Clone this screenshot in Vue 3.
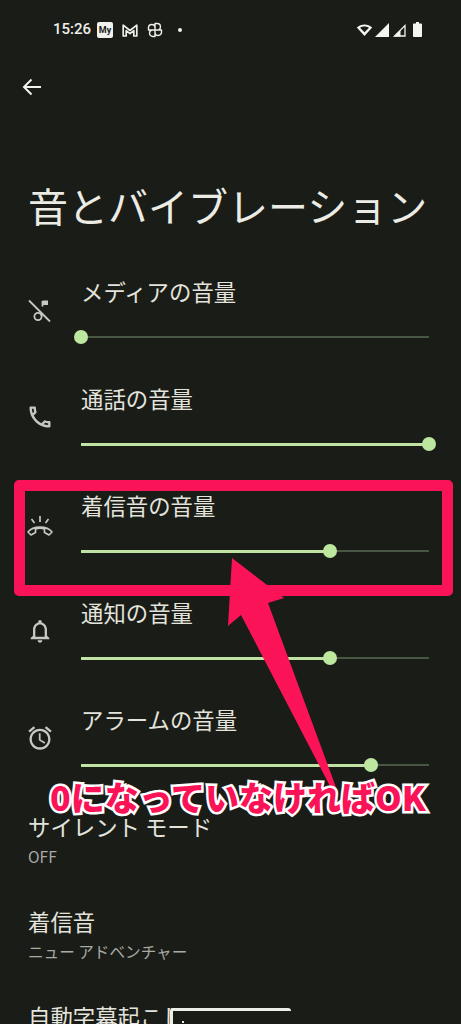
<template>
  <div class="screen">
    <div class="status">
      <span class="time">15:26</span>
      <span class="my">My</span>
      <svg class="st" width="16" height="16" viewBox="0 0 16 16" fill="none" stroke="#f0f0ea" stroke-width="1.7" stroke-linejoin="round">
        <path d="M1.2 14V3.2L8 8.5l6.8-5.3V14h-3V8.6L8 11.6 4.2 8.6V14z" />
      </svg>
      <svg class="st" width="16" height="16" viewBox="0 0 16 16" fill="none" stroke="#f0f0ea" stroke-width="1.4" stroke-linejoin="round">
        <path d="M8 8V1.5h2.2a3 3 0 0 1 0 6.5zM8 8h6.5v2.2a3 3 0 0 1-6.500 0zM8 8v6.500H5.800a3 3 0 0 1 0-6.500zM8 8H1.500V5.800a3 3 0 0 1 6.500 0z" />
      </svg>
      <span class="dot"></span>
      <span class="status-right">
        <svg width="17" height="14" viewBox="0 0 17 14">
          <path d="M8.500 13 .8 4.600C5 .6 12 .6 16.200 4.600z" fill="#f5f5ef" />
          <path d="M8.500 9.200 4 4.800c2.600-1.800 6.400-1.800 9 0z" fill="#1a1c18" />
        </svg>
        <svg width="14" height="14" viewBox="0 0 14 14"><path d="M14 0v14H0z" fill="#f5f5ef" /></svg>
        <svg class="sig" width="14" height="14" viewBox="0 0 14 14">
          <path d="M13 2.500V13H2.500z" fill="none" stroke="#f5f5ef" stroke-width="1.300" />
          <path d="M8.500 7v6.500H2z" fill="#f5f5ef" />
        </svg>
        <svg class="batt" width="9" height="15" viewBox="0 0 9 15"><path d="M3 0h3v1.500h2.200a.8.8 0 0 1 .8.800V14.200a.8.8 0 0 1-.8.800H.800a.8.8 0 0 1-.8-.800V2.300a.8.8 0 0 1 .8-.800H3z" fill="#f5f5ef" /></svg>
      </span>
    </div>

    <div class="appbar">
      <svg width="20" height="18" viewBox="0 0 20 18" fill="none" stroke="#f2f2ec" stroke-width="2">
        <path d="M19 9H2M9.500 1.500 2 9l7.500 7.500" />
      </svg>
    </div>

    <h1 class="heading">音とバイブレーション</h1>

    <div v-for="row in sliders" :key="row.title" class="slider-row">
      <div class="icon">
        <svg v-if="row.icon === 'media'" width="28" height="28" viewBox="0 0 28 28" fill="none" stroke="#c6c8c2" stroke-width="1.800">
          <path d="M3 4.500l21 21" />
          <circle cx="12" cy="20.500" r="3.600" />
          <path d="M15.600 20V17M16.500 10.500V5" />
          <path d="M16.500 4.500h5.500v4.500h-5.500z" fill="#c6c8c2" stroke="none" />
        </svg>
        <svg v-else-if="row.icon === 'ring'" width="28" height="28" viewBox="0 0 28 28" fill="none" stroke="#c6c8c2" stroke-width="1.700" stroke-linejoin="round">
          <path d="M2 22c5-6.500 19-6.500 24 0l-3 3-4.500-2.500v-3.500c-3-1-6-1-9 0v3.500L5 25z" />
          <path d="M14 6v6M5.500 9l3 4M22.500 9l-3 4" />
        </svg>
        <svg v-else width="28" height="28" viewBox="0 0 24 24" fill="#c6c8c2">
          <path :d="paths[row.icon]" />
        </svg>
      </div>
      <div class="body">
        <div class="title">{{ row.title }}</div>
        <div class="track">
          <div class="fill" :style="{ width: row.value * 100 + '%' }"></div>
          <div class="thumb" :style="{ left: row.value * 100 + '%' }"></div>
        </div>
      </div>
    </div>

    <div v-for="item in items" :key="item.title" class="item">
      <div class="title">{{ item.title }}</div>
      <div class="sub">{{ item.sub }}</div>
    </div>

    <!-- 注釈 -->
    <div class="mark"></div>
    <svg class="arrow" width="461" height="1024" viewBox="0 0 461 1024">
      <path d="M232 558 284 598 268 603 337 790 332 790 241 615 228 626z" fill="#fb1358" />
    </svg>
    <div class="caption">0になっていなければOK</div>
    <div class="popup"><span></span></div>
  </div>
</template>

<script setup>
const paths = {
  call: 'M6.54 5c.06.89.21 1.76.45 2.59l-1.2 1.2c-.41-1.2-.67-2.47-.76-3.79h1.51m9.86 12.02c.85.24 1.72.39 2.6.45v1.49c-1.32-.09-2.59-.35-3.8-.75l1.2-1.19M7.5 3H4c-.55 0-1 .45-1 1 0 9.39 7.61 17 17 17 .55 0 1-.45 1-1v-3.49c0-.55-.45-1-1-1-1.24 0-2.45-.2-3.57-.57-.1-.04-.21-.05-.31-.05-.26 0-.51.1-.71.29l-2.2 2.2c-2.83-1.45-5.15-3.76-6.59-6.59l2.2-2.2c.28-.28.36-.67.25-1.02C8.7 6.45 8.5 5.25 8.5 4c0-.55-.45-1-1-1z',
  bell: 'M12 22c1.100 0 2-.9 2-2h-4c0 1.100.9 2 2 2zm6-6v-5c0-3.070-1.630-5.640-4.500-6.320V4c0-.83-.67-1.500-1.500-1.500s-1.500.67-1.500 1.500v.68C7.640 5.360 6 7.920 6 11v5l-2 2v1h16v-1l-2-2zm-2 1H8v-6c0-2.480 1.510-4.500 4-4.500s4 2.020 4 4.500v6z',
  alarm: 'M22 5.720l-4.600-3.860-1.290 1.530 4.600 3.860L22 5.720zM7.880 3.390L6.600 1.860 2 5.710l1.290 1.530 4.590-3.850zM12.500 8H11v6l4.750 2.850.75-1.230-4-2.370V8zM12 4c-4.970 0-9 4.030-9 9s4.030 9 9 9 9-4.030 9-9-4.030-9-9-9zm0 16c-3.870 0-7-3.130-7-7s3.130-7 7-7 7 3.130 7 7-3.130 7-7 7z',
}

const sliders = [
  { title: 'メディアの音量', icon: 'media', value: 0 },
  { title: '通話の音量', icon: 'call', value: 1 },
  { title: '着信音の音量', icon: 'ring', value: 0.715 },
  { title: '通知の音量', icon: 'bell', value: 0.715 },
  { title: 'アラームの音量', icon: 'alarm', value: 0.833 },
]

const items = [
  { title: 'サイレント モード', sub: 'OFF' },
  { title: '着信音', sub: 'ニュー アドベンチャー' },
  { title: '自動字幕起こし', sub: '' },
]
</script>

<style>
html, body {
  margin: 0;
  background: #1a1c18;
}
</style>

<style scoped>
.screen {
  position: relative;
  width: 461px;
  height: 1024px;
  overflow: hidden;
  background: #1a1c18;
  color: #e4e4dd;
  font-family: "Noto Sans CJK JP", "Noto Sans", sans-serif;
}

.status {
  height: 58px;
  box-sizing: border-box;
  padding: 21px 39px 0 53px;
  display: flex;
  align-items: flex-start;
  color: #f0f0ea;
}

.time {
  font-family: Roboto, sans-serif;
  font-size: 15px;
  font-weight: 500;
  line-height: 17px;
  width: 44px;
}

.my {
  width: 16px;
  height: 16px;
  margin-top: 1px;
  border-radius: 2px;
  background: #f2f2ec;
  color: #1a1c18;
  font-family: Roboto, sans-serif;
  font-size: 9px;
  font-weight: 700;
  line-height: 16px;
  text-align: center;
}

.st {
  margin: 1px 0 0 9px;
}

.dot {
  width: 4px;
  height: 4px;
  margin: 7px 0 0 15px;
  border-radius: 50%;
  background: #f0f0ea;
}

.status-right {
  margin-left: auto;
  display: flex;
  align-items: center;
  gap: 2px;
  height: 17px;
}

.sig {
  margin-left: 1px;
}

.batt {
  margin-left: 5px;
}

.appbar {
  height: 58px;
  padding-left: 22px;
  display: flex;
  align-items: center;
}

.heading {
  margin: 0;
  height: 154px;
  box-sizing: border-box;
  padding: 60px 0 0 28px;
  font-size: 40px;
  font-weight: 400;
  line-height: 58px;
  white-space: nowrap;
  color: #ecece5;
}

.slider-row {
  height: 107px;
  display: flex;
  padding-left: 26px;
}

.icon {
  width: 28px;
  height: 28px;
  margin-top: 26px;
}

.body {
  width: 348px;
  margin-left: 27px;
}

.title {
  margin-top: -2px;
  font-size: 22.400px;
  line-height: 46px;
  white-space: nowrap;
}

.track {
  position: relative;
  height: 2px;
  margin-top: 22px;
  background: #4a5644;
}

.fill {
  position: absolute;
  left: 0;
  top: -0.500px;
  height: 3px;
  background: #c0e2a2;
}

.thumb {
  position: absolute;
  top: 1px;
  width: 14px;
  height: 14px;
  border-radius: 50%;
  background: #bde69e;
  transform: translate(-50%, -50%);
}

.item {
  height: 96px;
  padding-left: 28px;
}

.item .title {
  margin-top: -1px;
  line-height: 44px;
}

.sub {
  font-size: 15.600px;
  line-height: 16px;
  color: #a8aaa4;
}

.mark {
  position: absolute;
  left: 14px;
  top: 480px;
  width: 439px;
  height: 116px;
  box-sizing: border-box;
  border: 11px solid #fb1358;
  border-radius: 5px;
}

.arrow {
  position: absolute;
  left: 0;
  top: 0;
}

.caption {
  position: absolute;
  left: 50px;
  top: 776px;
  font-size: 34px;
  font-weight: 900;
  line-height: 42px;
  white-space: nowrap;
  color: #fb1358;
  -webkit-text-stroke: 5px #fff;
  paint-order: stroke fill;
}

.popup {
  position: absolute;
  left: 170px;
  top: 1008px;
  width: 121px;
  height: 30px;
  box-sizing: border-box;
  border-top: 3px solid #eeeee8;
  border-left: 3px solid #eeeee8;
  border-radius: 3px 3px 0 0;
  background: #1a1c18;
}

.popup span {
  position: absolute;
  left: 9px;
  top: 10px;
  width: 2px;
  height: 2px;
  background: #eeeee8;
}
</style>
